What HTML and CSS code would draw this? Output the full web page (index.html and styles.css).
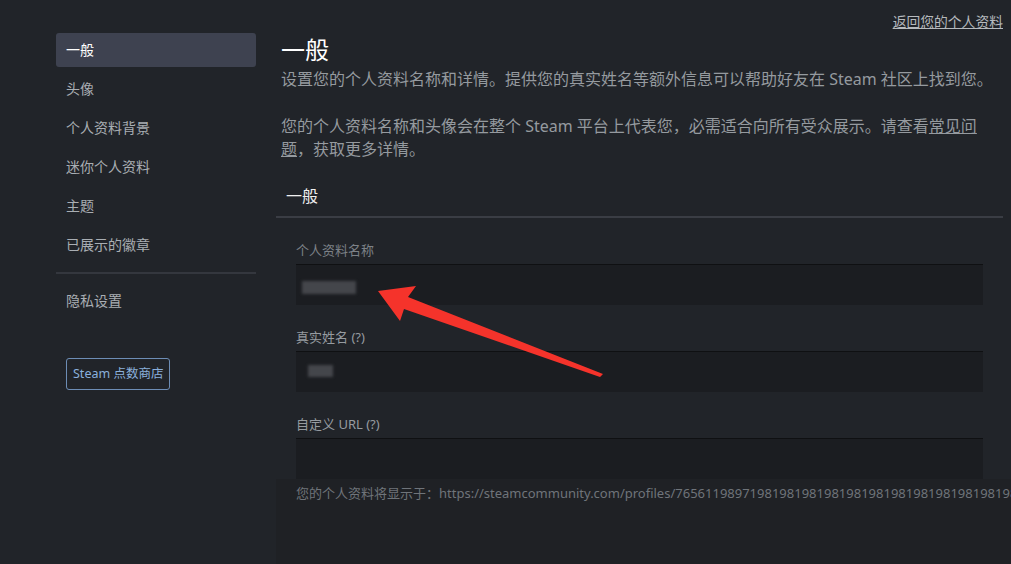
FILE: index.html
```html
<!DOCTYPE html>
<html>
<head>
    <title>编辑个人资料</title>
    <link rel="stylesheet" href="styles.css">
</head>
<body>
    <div class="page">
        <div class="topbar">
            <a class="back-link" href="#">返回您的个人资料</a>
        </div>

        <div class="columns">
            <div class="sidebar">
                <div class="nav-item active">一般</div>
                <div class="nav-item">头像</div>
                <div class="nav-item">个人资料背景</div>
                <div class="nav-item">迷你个人资料</div>
                <div class="nav-item">主题</div>
                <div class="nav-item">已展示的徽章</div>
                <div class="nav-divider"></div>
                <div class="nav-item">隐私设置</div>

                <a class="points-btn" href="#">Steam 点数商店</a>
            </div>

            <div class="main">
                <h1 class="page-title">一般</h1>
                <div class="intro">
                    <p>设置您的个人资料名称和详情。提供您的真实姓名等额外信息可以帮助好友在 Steam 社区上找到您。</p>
                    <p>您的个人资料名称和头像会在整个 Steam 平台上代表您，必需适合向所有受众展示。请查看<a href="#">常见问题</a>，获取更多详情。</p>
                </div>

                <div class="section-header">一般</div>

                <div class="field">
                    <div class="field-label dim">个人资料名称</div>
                    <div class="field-input">
                        <span class="blur-text wide"></span>
                    </div>
                </div>

                <div class="field">
                    <div class="field-label">真实姓名 (?)</div>
                    <div class="field-input">
                        <span class="blur-text short"></span>
                    </div>
                </div>

                <div class="field last">
                    <div class="field-label">自定义 URL (?)</div>
                    <div class="field-input"></div>
                </div>

                <div class="note-area">
                    <div class="url-note">您的个人资料将显示于：https://steamcommunity.com/profiles/76561198971981981981981981981981981981981981989819</div>
                </div>
            </div>
        </div>
    </div>

    <!-- red annotation arrow -->
    <svg class="arrow" width="1011" height="564" viewBox="0 0 1011 564">
        <polygon points="378,291 416,286 408,297 603,374 600,377 404,309 400,321" fill="#f5332b"/>
    </svg>
</body>
</html>
```

FILE: styles.css
```css
html, body {
    margin: 0;
    padding: 0;
    background-color: #212429;
    overflow: hidden;
}

body {
    font-family: "Noto Sans", "Noto Sans CJK SC", sans-serif;
    color: #b8bcbf;
    width: 1011px;
    height: 564px;
    position: relative;
}

.page {
    padding: 0 8px 0 56px;
}

.topbar {
    height: 33px;
    padding-top: 12px;
    box-sizing: border-box;
    display: flex;
    justify-content: flex-end;
}

.back-link {
    color: #b6babe;
    font-size: 13.8px;
    line-height: 20px;
    text-decoration: underline;
}

.columns {
    display: flex;
    gap: 20px;
}

/* sidebar */
.sidebar {
    width: 200px;
    flex-shrink: 0;
    display: flex;
    flex-direction: column;
    gap: 5px;
}

.nav-item {
    height: 34px;
    line-height: 34px;
    padding: 0 10px;
    font-size: 14px;
    color: #a9aeb3;
    border-radius: 3px;
}

.nav-item.active {
    background-color: #3e4250;
    color: #ffffff;
}

.nav-divider {
    height: 2px;
    background-color: #34373e;
    margin: 5px 0;
}

.points-btn {
    align-self: flex-start;
    margin: 35px 0 0 10px;
    height: 32px;
    line-height: 30px;
    box-sizing: border-box;
    padding: 0 6px;
    border: 1px solid #6d8db5;
    border-radius: 3px;
    color: #8ab0dc;
    font-size: 12.5px;
    text-decoration: none;
}

/* main column */
.main {
    flex: 1;
    min-width: 0;
}

.page-title {
    margin: 2px 0 0 5px;
    font-size: 24px;
    line-height: 30px;
    font-weight: normal;
    color: #ffffff;
}

.intro {
    margin: 3px 0 0 5px;
    max-width: 716px;
    font-size: 16px;
    line-height: 23px;
    color: #959a9f;
}

.intro p {
    margin: 0 0 24px 0;
}

.intro a {
    color: #959a9f;
    text-decoration: underline;
}

.section-header {
    margin-top: -7px;
    padding: 8px 10px 10px 10px;
    font-size: 16px;
    line-height: 20px;
    color: #f0f0f0;
    border-bottom: 2px solid #3a3d44;
}

.field {
    padding: 0 20px;
    margin-top: 23px;
}

.field-label {
    font-size: 13px;
    line-height: 18px;
    color: #969ba0;
    margin-bottom: 5px;
}

.field-label.dim {
    color: #7c8187;
}

.field-input {
    height: 41px;
    box-sizing: border-box;
    background-color: #1b1d21;
    border-top: 1px solid #0f1012;
    position: relative;
}

.blur-text {
    position: absolute;
    background-color: #44464b;
    filter: blur(1.5px);
}

.blur-text.wide {
    left: 6px;
    top: 16px;
    width: 54px;
    height: 13px;
}

.blur-text.short {
    left: 12px;
    top: 13px;
    width: 25px;
    height: 12px;
}

.note-area {
    background-color: #1f2125;
    margin-right: -8px;
    height: 90px;
    padding: 5px 20px 0 20px;
}

.url-note {
    font-size: 13px;
    line-height: 18px;
    color: #6f747a;
    white-space: nowrap;
}

.arrow {
    position: absolute;
    left: 0;
    top: 0;
    pointer-events: none;
}
```
